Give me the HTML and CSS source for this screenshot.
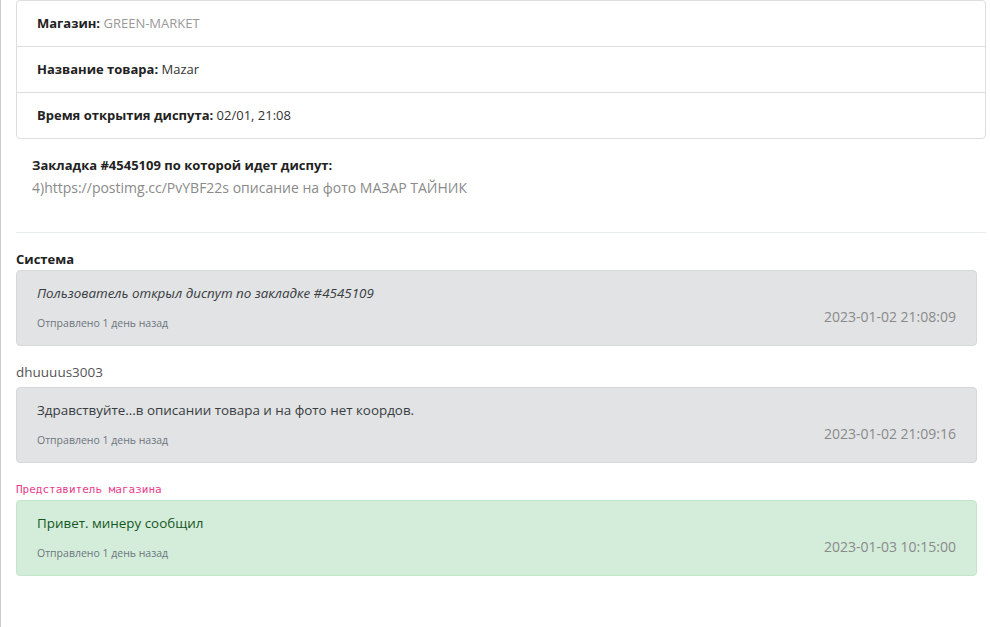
FILE: index.html
```
<!DOCTYPE html>
<html lang="ru">
<head>
  <meta charset="UTF-8">
  <title>Диспут #4545109</title>
  <link rel="stylesheet" href="styles.css">
</head>
<body>
  <div class="page">
    <!-- информация о диспуте -->
    <ul class="info-list">
      <li><b>Магазин:</b> <span class="shop">GREEN-MARKET</span></li>
      <li><b>Название товара:</b> Mazar</li>
      <li><b>Время открытия диспута:</b> 02/01, 21:08</li>
    </ul>

    <div class="bookmark">
      <div class="bookmark-title">Закладка #4545109 по которой идет диспут:</div>
      <div class="bookmark-text">4)https://postimg.cc/PvYBF22s описание на фото МАЗАР ТАЙНИК</div>
    </div>

    <hr class="divider">

    <!-- переписка -->
    <div class="chat">
      <div class="author author-system">Система</div>
      <div class="msg msg-gray">
        <p class="msg-text"><i>Пользователь открыл диспут по закладке #4545109</i></p>
        <div class="msg-meta">
          <small>Отправлено 1 день назад</small>
          <span class="msg-date">2023-01-02 21:08:09</span>
        </div>
      </div>

      <div class="author author-user">dhuuuus3003</div>
      <div class="msg msg-gray">
        <p class="msg-text">Здравствуйте...в описании товара и на фото нет коордов.</p>
        <div class="msg-meta">
          <small>Отправлено 1 день назад</small>
          <span class="msg-date">2023-01-02 21:09:16</span>
        </div>
      </div>

      <code class="author author-shop">Представитель магазина</code>
      <div class="msg msg-green">
        <p class="msg-text">Привет. минеру сообщил</p>
        <div class="msg-meta">
          <small>Отправлено 1 день назад</small>
          <span class="msg-date">2023-01-03 10:15:00</span>
        </div>
      </div>
    </div>
  </div>
</body>
</html>
```

FILE: styles.css
```
body {
  margin: 0;
  font-family: "Open Sans", "Noto Sans", sans-serif;
  font-size: 13px;
  line-height: 21px;
  color: #333;
  background: #fff;
}

.page {
  min-height: 627px;
  border-left: 1px solid #ccc;
  padding: 0 4px 0 15px;
  box-sizing: border-box;
}

.info-list {
  list-style: none;
  margin: 0;
  padding: 0;
  border: 1px solid #ddd;
  border-radius: 4px;
}

.info-list li {
  padding: 12px 20px;
  border-bottom: 1px solid #ddd;
  color: #333;
}

.info-list li:last-child {
  border-bottom: none;
}

.info-list b {
  color: #222;
}

.shop {
  color: #999;
}

.bookmark {
  padding: 16px 16px 34px;
}

.bookmark-title {
  font-weight: bold;
  color: #222;
}

.bookmark-text {
  font-size: 14px;
  color: #8a8a8a;
  margin-top: 1px;
}

.divider {
  border: none;
  border-top: 1px solid #e9ecef;
  margin: 0 0 16px;
}

.chat {
  padding-right: 9px;
}

.author {
  display: block;
}

.author-system {
  font-weight: bold;
  color: #222;
}

.author-user {
  margin-top: 16px;
  margin-bottom: 4px;
  font-size: 13.5px;
  color: #555;
}

.author-shop {
  margin-top: 19px;
  margin-bottom: 2px;
  font-family: "DejaVu Sans Mono", "Liberation Mono", monospace;
  font-size: 11px;
  line-height: 16px;
  color: #e83e8c;
}

.msg {
  padding: 12px 20px;
  border: 1px solid #d6d8db;
  border-radius: 4px;
}

.msg-gray {
  background: #e2e3e5;
  color: #383d41;
}

.msg-green {
  background: #d4edda;
  border-color: #c3e6cb;
  color: #155724;
}

.msg-text {
  margin: 0 0 2px;
  font-size: 13.4px;
}

.msg-meta {
  display: flex;
  justify-content: space-between;
  height: 27px;
}

.msg-meta small {
  align-self: flex-end;
  margin-bottom: 2px;
  font-size: 10.5px;
  line-height: 16px;
  color: #6c757d;
}

.msg-date {
  font-size: 14px;
  color: #8a8a8a;
}
```
